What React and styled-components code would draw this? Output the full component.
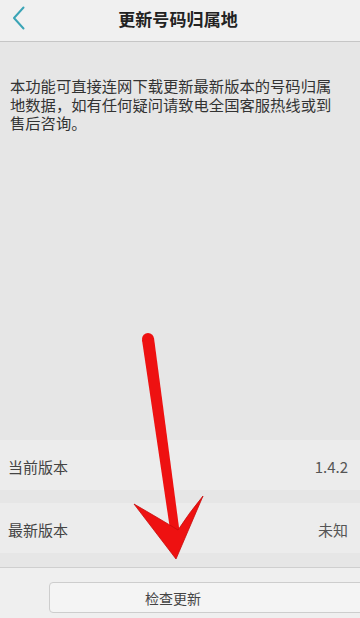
import React from 'react'
import styled, { createGlobalStyle } from 'styled-components'

const GlobalStyle = createGlobalStyle`
    html, body {
        margin : 0;
        padding : 0;
        background : #e6e6e6;
    }
    * {
        box-sizing : border-box;
    }
`

const App = () => {
    return (
        <>
            <GlobalStyle />
            <Page>
                <Header>
                    <BackBtn>
                        <svg width="14" height="24" viewBox="0 0 14 24">
                            <path d="M11.5 1.5 L2 12 L11.5 22.5" fill="none" stroke="#3aa4b6" strokeWidth="2" strokeLinecap="round" strokeLinejoin="round" />
                        </svg>
                    </BackBtn>
                    <Title>更新号码归属地</Title>
                </Header>
                <Body>
                    <Desc>本功能可直接连网下载更新最新版本的号码归属地数据，如有任何疑问请致电全国客服热线或到售后咨询。</Desc>
                    <Rows>
                        <Row>
                            <RowLabel>当前版本</RowLabel>
                            <RowValue>1.4.2</RowValue>
                        </Row>
                        <Row>
                            <RowLabel>最新版本</RowLabel>
                            <RowValue>未知</RowValue>
                        </Row>
                    </Rows>
                </Body>
                <BottomBar>
                    <CheckBtn>检查更新</CheckBtn>
                </BottomBar>
                {/* red arrow drawn over the page */}
                <Arrow width="360" height="618" viewBox="0 0 360 618">
                    <circle cx="148" cy="339" r="6" fill="#ee1111" />
                    <polygon points="142,340 154,338 180,535 171,536" fill="#ee1111" />
                    <path d="M134 504 L176 559 L203 496 Q189 513 178 530 Q160 519 134 504 Z" fill="#ee1111" stroke="#c80d0d" strokeWidth="0.8" />
                </Arrow>
            </Page>
        </>
    )
}

const Page = styled.div`
    position : relative;
    width : 360px;
    height : 618px;
    overflow : hidden;
    display : flex;
    flex-direction : column;
    background : #e6e6e6;
    font-family : "Noto Sans CJK SC", "Noto Sans", sans-serif;
`
const Header = styled.div`
    position : relative;
    height : 42px;
    flex-shrink : 0;
    display : flex;
    align-items : center;
    justify-content : center;
    background : #f0f0f0;
    border-bottom : 1px solid #c6c6c6;
`
const BackBtn = styled.div`
    position : absolute;
    left : 12px;
    top : 6px;
    width : 16px;
    height : 24px;
    display : flex;
    align-items : center;
`
const Title = styled.div`
    margin-top : -4px;
    margin-right : 4px;
    font-size : 17px;
    font-weight : 700;
    color : #222;
    letter-spacing : 0.1px;
`
const Body = styled.div`
    flex : 1;
    display : flex;
    flex-direction : column;
    justify-content : space-between;
`
const Desc = styled.p`
    margin : 34px 0 0 10px;
    width : 330px;
    font-size : 15.3px;
    line-height : 18.5px;
    color : #333;
`
const Rows = styled.div`
    display : flex;
    flex-direction : column;
    gap : 13px;
    padding-bottom : 14px;
    border-bottom : 1px solid #cfcfcf;
`
const Row = styled.div`
    height : 50px;
    padding : 0 12px 0 8px;
    display : flex;
    align-items : center;
    justify-content : space-between;
    background : #ececec;
`
const RowLabel = styled.div`
    font-size : 15px;
    color : #444;
    margin-top : 2px;
`
const RowValue = styled.div`
    font-size : 15px;
    color : #555;
    margin-top : 2px;
`
const BottomBar = styled.div`
    height : 50px;
    flex-shrink : 0;
    padding : 14px 0 5px 49px;
    display : flex;
    background : #efefef;
`
const CheckBtn = styled.div`
    flex : 1;
    margin-right : -12px;
    padding-right : 75px;
    display : flex;
    align-items : center;
    justify-content : center;
    background : #f4f4f4;
    border : 1px solid #cdcdcd;
    border-radius : 4px;
    font-size : 14px;
    color : #444;
`
const Arrow = styled.svg`
    position : absolute;
    left : 0;
    top : 0;
    pointer-events : none;
`

export default App
